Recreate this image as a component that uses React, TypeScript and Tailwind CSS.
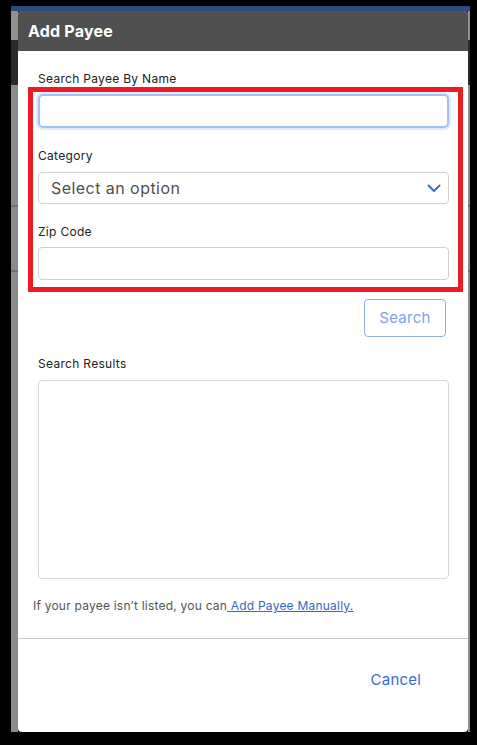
import React from "react";

const font = { fontFamily: "Inter, 'Noto Sans', sans-serif" };

const SideStrip: React.FC<{ width: string }> = ({ width }) => (
  <div className={`${width} flex flex-col`}>
    <div className="h-[29px] bg-[#909090]" />
    <div className="h-[45px] bg-[#2a2a2a]" />
    <div className="h-[120px] bg-[#8c8c8c]" />
    <div className="h-[2px] bg-[#6e6e6e]" />
    <div className="h-[63px] bg-[#8c8c8c]" />
    <div className="h-[2px] bg-[#6e6e6e]" />
    <div className="flex-1 bg-[#8c8c8c]" />
  </div>
);

const Label: React.FC<{ children: React.ReactNode; className?: string }> = ({
  children,
  className,
}) => (
  <label
    className={`block text-[12px] leading-[16px] tracking-[0.3px] text-[#222] ${className ?? ""}`}
  >
    {children}
  </label>
);

export default function App() {
  return (
    <div
      className="h-[745px] w-[477px] bg-black pl-[11px] pr-[7px] pt-[6px] pb-[13px]"
      style={font}
    >
      <div className="flex h-full flex-col">
        <div className="h-[5px] bg-[#2c4a7e]" />
        <div className="flex flex-1">
          <SideStrip width="w-[7px]" />
          <div className="relative flex flex-1 flex-col overflow-hidden rounded-[4px] bg-white">
            <div className="flex h-[40px] items-center bg-[#505050] px-[10px]">
              <h2 className="text-[16px] font-bold tracking-[0.2px] text-white">Add Payee</h2>
            </div>

            <div className="flex flex-col pl-[20px] pr-[19px]">
              <Label className="mt-[20px]">Search Payee By Name</Label>
              <input className="mt-[7px] h-[34px] w-full rounded-[5px] border-2 border-[#a3c1f6] px-3 shadow-[0_0_0_2px_#dfe9fc] outline-none" />

              <Label className="mt-[20px]">Category</Label>
              <div className="mt-[8px] flex h-[32px] items-center justify-between rounded-[4px] border border-[#cfcfcf] pl-[12px] pr-[7px]">
                <span className="text-[16px] tracking-[0.45px] text-[#505050]">
                  Select an option
                </span>
                <svg width="14" height="9" viewBox="0 0 14 9" fill="none">
                  <polyline
                    points="1.5,1.5 7,7 12.5,1.5"
                    stroke="#3b6dd0"
                    strokeWidth="2"
                    strokeLinecap="round"
                    strokeLinejoin="round"
                  />
                </svg>
              </div>

              <Label className="mt-[20px]">Zip Code</Label>
              <input className="mt-[7px] h-[33px] w-full rounded-[4px] border border-[#cfcfcf] px-3 outline-none" />

              <div className="mt-[19px] flex justify-end pr-[3px]">
                <button className="h-[38px] w-[82px] rounded-[4px] border border-[#8eaef2] text-[15px] tracking-[0.3px] text-[#7ea2f0]">
                  Search
                </button>
              </div>

              <Label className="mt-[19px]">Search Results</Label>
              <div className="mt-[8px] h-[199px] rounded-[4px] border border-[#d3d7dd]" />
            </div>

            <p className="mt-[19px] px-[15px] text-[12px] leading-[16px] tracking-[0.22px] text-[#555]">
              If your payee isn’t listed, you can
              <a href="#" className="text-[#3466c8] underline">
                {" "}
                Add Payee Manually.
              </a>
            </p>

            <div className="mt-[24px] h-px bg-[#c8c8c8]" />

            <div className="mt-[31px] flex justify-end pr-[47px]">
              <button className="text-[15px] leading-[20px] tracking-[0.2px] text-[#3a6cd4]">
                Cancel
              </button>
            </div>

            <div className="pointer-events-none absolute left-[10px] top-[76px] h-[205px] w-[435px] border-[5px] border-[#ec1c24]" />
          </div>
          <SideStrip width="w-[2px]" />
        </div>
      </div>
    </div>
  );
}
